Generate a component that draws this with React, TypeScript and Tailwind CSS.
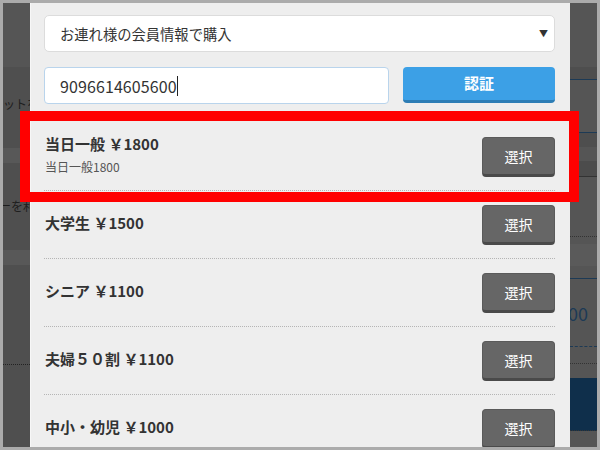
const plans = [
  { name: '当日一般', price: '1800', note: '当日一般1800' },
  { name: '大学生', price: '1500' },
  { name: 'シニア', price: '1100' },
  { name: '夫婦５０割', price: '1100' },
  { name: '中小・幼児', price: '1000' },
];

function LeftBackdrop() {
  return (
    <div className="w-[27px] shrink-0 flex flex-col overflow-hidden bg-[#4f4f4f] text-[#1e1e1e] text-[12px] whitespace-nowrap">
      <div className="h-[64px] bg-[#555]" />
      <div className="h-[81px] flex items-center pb-[8px]">
        <span className="leading-none">ットを</span>
      </div>
      <div className="h-[15px] bg-[#585858]" />
      <div className="h-[87px] flex items-center pb-[2px]">
        <span className="-ml-[4px] leading-none">ーを利</span>
      </div>
      <div className="h-[15px] bg-[#585858]" />
      <div className="h-[100px] border-b border-dotted border-[#222]" />
    </div>
  );
}

function RightBackdrop() {
  return (
    <div className="w-[27px] shrink-0 flex flex-col overflow-hidden bg-[#555] whitespace-nowrap">
      <div className="h-[64px]" />
      <div className="h-[13px] bg-[#4e4e4e] border-b border-[#1d3a55]" />
      <div className="h-[53px] border-b border-[#1d3a55]" />
      <div className="h-[14px] bg-[#4e4e4e]" />
      <div className="h-[14px]" />
      <div className="h-[16px] bg-[#4c4c4c] border-b border-[#333]" />
      <div className="h-[60px] border-b border-dotted border-[#333]" />
      <div className="h-[7px]" />
      <div className="h-[22px] bg-[#5a5a5a]" />
      <div className="h-[13px] border-b border-[#1d3a55]" />
      <div className="h-[68px] flex items-center border-b border-dashed border-[#1d3a55]">
        <span className="-ml-[2px] text-[18px] leading-none text-[#1d3a55]">00</span>
      </div>
      <div className="h-[17px] border-b border-dotted border-[#333]" />
      <div className="h-[14px]" />
      <div className="h-[53px] bg-[#0f2f4b] border-b border-dotted border-[#333]" />
    </div>
  );
}

function PlanRow({ name, price, note }: { name: string; price: string; note?: string }) {
  return (
    <div className="h-[68px] shrink-0 flex items-center justify-between border-b border-dotted border-[#b5b5b5] pl-[1px]">
      <div className="flex flex-col pb-[4px]">
        <p className="text-[15px] leading-[20px] font-bold text-[#333]">
          {name} ￥{price}
        </p>
        {note && <p className="mt-[5px] text-[12px] leading-[16px] text-[#555]">{note}</p>}
      </div>
      <button className="w-[73px] h-[40px] rounded-[4px] bg-[#666] border border-[#5a5a5a] border-b-[3px] border-b-[#4a4a4a] text-white text-[14px] leading-none">
        選択
      </button>
    </div>
  );
}

export default function App() {
  return (
    <div className="relative w-[600px] h-[450px] bg-[#ababab] p-[3px] font-['Noto_Sans_CJK_JP','Noto_Sans',sans-serif] overflow-hidden">
      <div className="flex h-[444px]">
        <LeftBackdrop />

        {/* Modal panel */}
        <div className="w-[540px] shrink-0 bg-[#eeeeee] border-l border-[#f7f7f7] pl-[13px] pr-[15px] pt-[12px] flex flex-col overflow-hidden">
          <div className="h-[37px] shrink-0 flex items-center justify-between rounded-[5px] border border-[#dcdcdc] bg-white pl-[15px] pr-[6px]">
            <span className="text-[14.3px] text-[#333]">お連れ様の会員情報で購入</span>
            <span className="text-[9px] text-[#333] leading-none">▼</span>
          </div>

          <div className="mt-[15px] flex gap-[14px] shrink-0">
            <div className="w-[345px] h-[37px] flex items-center rounded-[4px] border border-[#b9d4ec] bg-white pl-[15px]">
              <span className="text-[16px] text-[#333] tracking-[0.1px]">9096614605600</span>
              <span className="w-[1px] h-[20px] bg-[#222]" />
            </div>
            <button className="flex-1 h-[36px] rounded-[4px] bg-[#3ca0e6] border-b-[3px] border-[#2d7db5] text-white text-[15px] font-bold">
              認証
            </button>
          </div>

          <div className="mt-[19px] flex flex-col">
            {plans.map((p) => (
              <PlanRow key={p.name} {...p} />
            ))}
          </div>
        </div>

        <RightBackdrop />
      </div>

      {/* annotation highlight */}
      <div className="absolute left-[20px] top-[111px] w-[559px] h-[91px] border-[10px] border-[#ff0000] pointer-events-none" />
    </div>
  );
}
